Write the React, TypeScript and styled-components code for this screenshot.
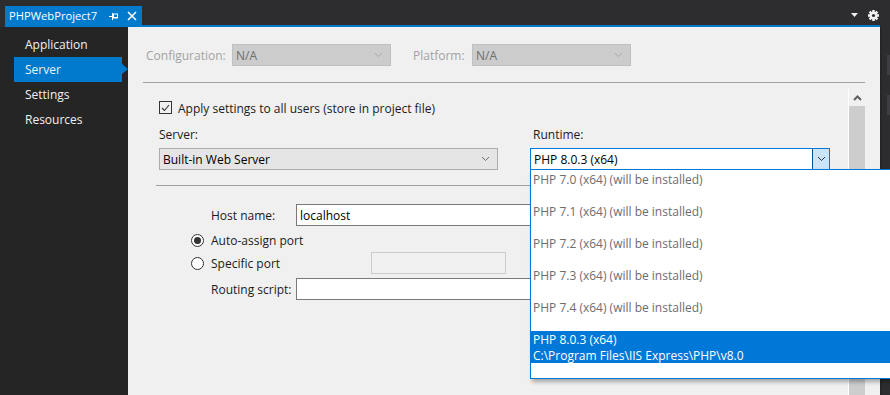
import React from 'react';
import styled, { createGlobalStyle } from 'styled-components';

const FONT = `"Open Sans", "Noto Sans", sans-serif`;

const Global = createGlobalStyle`
  html, body { margin: 0; padding: 0; background: #2d2d30; overflow: hidden; }
  * { box-sizing: border-box; }
`;

const Window = styled.div`
  width: 890px;
  height: 395px;
  overflow: hidden;
  background: #2d2d30;
  display: flex;
  flex-direction: column;
  font-family: ${FONT};
  font-size: 12px;
`;

const TabStrip = styled.div`
  height: 27px;
  flex: none;
  display: flex;
  padding-left: 5px;
  padding-right: 10px;
`;

const Tab = styled.div`
  margin-top: 6px;
  height: 21px;
  width: 137px;
  background: #007acc;
  color: #ffffff;
  display: flex;
  align-items: center;
  padding: 0 1px 2px 4px;
  font-size: 11.2px;
`;

const TabTitle = styled.span`
  flex: 1;
`;

const TabIcon = styled.span`
  display: flex;
  align-items: center;
  justify-content: center;
  width: 18px;
  height: 16px;
`;

const TabLine = styled.div`
  flex: 1;
  border-bottom: 2px solid #007acc;
  display: flex;
  justify-content: flex-end;
  align-items: center;
  gap: 10px;
  padding: 5px 1px 0 0;
`;

const Main = styled.div`
  flex: 1;
  display: flex;
  min-height: 0;
`;

const Sidebar = styled.nav`
  width: 128px;
  flex: none;
  background: #252526;
  padding-top: 5px;
  display: flex;
  flex-direction: column;
`;

const NavItem = styled.div<{ $active?: boolean }>`
  position: relative;
  height: 25px;
  margin-left: 14px;
  width: 108px;
  padding-left: 11px;
  line-height: 25px;
  color: #f1f1f1;
  background: ${(p) => (p.$active ? '#007acc' : 'transparent')};
  &::after {
    content: '';
    display: ${(p) => (p.$active ? 'block' : 'none')};
    position: absolute;
    right: -6px;
    top: 7px;
    border-left: 6px solid #007acc;
    border-top: 5px solid transparent;
    border-bottom: 5px solid transparent;
  }
`;

const Panel = styled.section`
  width: 752px;
  flex: none;
  background: #f0f0f0;
  display: flex;
  flex-direction: column;
  padding: 0 15px;
`;

const ConfigRow = styled.div`
  margin-top: 17px;
  height: 22px;
  display: flex;
  align-items: center;
  padding-left: 3px;
`;

const DimLabel = styled.span<{ $w: number; $ml?: number }>`
  width: ${(p) => p.$w}px;
  margin-left: ${(p) => p.$ml ?? 0}px;
  color: #a2a2a2;
`;

const Select = styled.div<{ $w: number; $variant: 'disabled' | 'normal' | 'focus' }>`
  position: relative;
  width: ${(p) => p.$w}px;
  height: 22px;
  display: flex;
  align-items: center;
  border: 1px solid
    ${(p) => (p.$variant === 'disabled' ? '#bfbfbf' : p.$variant === 'focus' ? '#0078d7' : '#acacac')};
  background: ${(p) => (p.$variant === 'disabled' ? '#cccccc' : p.$variant === 'focus' ? '#ffffff' : '#e5e5e5')};
  color: ${(p) => (p.$variant === 'disabled' ? '#6d6d6d' : '#000000')};
`;

const SelectText = styled.span`
  flex: 1;
  padding-left: 3px;
  white-space: nowrap;
`;

const SelectButton = styled.span<{ $focus?: boolean }>`
  width: 17px;
  height: 100%;
  display: flex;
  align-items: center;
  justify-content: center;
  margin-right: ${(p) => (p.$focus ? '0' : '3px')};
  background: ${(p) => (p.$focus ? '#cce4f7' : 'transparent')};
  border-left: ${(p) => (p.$focus ? '1px solid #005499' : 'none')};
`;

const Rule = styled.div<{ $ml?: number; $mt: number; $mr?: number }>`
  height: 1px;
  flex: none;
  background: #a0a0a0;
  margin-top: ${(p) => p.$mt}px;
  margin-left: ${(p) => p.$ml ?? 0}px;
  margin-right: ${(p) => p.$mr ?? 0}px;
`;

const ScrollArea = styled.div`
  margin-top: 6px;
  flex: 1;
  display: flex;
  min-height: 0;
`;

const Content = styled.div`
  flex: 1;
  padding: 12px 0 0 16px;
  display: flex;
  flex-direction: column;
  color: #1b1b1b;
`;

const Scrollbar = styled.div`
  width: 17px;
  flex: none;
  border-left: 1px solid #ffffff;
  display: flex;
  flex-direction: column;
`;

const ScrollArrow = styled.div`
  height: 17px;
  display: flex;
  align-items: center;
  justify-content: center;
  background: #f0f0f0;
`;

const ScrollThumb = styled.div`
  flex: 1;
  background: #cdcdcd;
`;

const CheckRow = styled.label`
  display: flex;
  align-items: center;
  height: 13px;
  gap: 6px;
  & > span:last-child {
    padding-top: 2px;
  }
`;

const CheckBox = styled.span`
  width: 13px;
  height: 13px;
  border: 1px solid #333333;
  display: flex;
  align-items: center;
  justify-content: center;
`;

const Columns = styled.div`
  display: flex;
  gap: 32px;
  margin-top: 12px;
`;

const Column = styled.div<{ $labelPad?: number }>`
  display: flex;
  flex-direction: column;
  gap: 5px;
  & > span:first-child {
    padding-left: ${(p) => p.$labelPad ?? 0}px;
    line-height: 16px;
    padding-top: 1px;
  }
`;

const FieldRow = styled.div<{ $mt: number; $h?: number }>`
  display: flex;
  align-items: center;
  height: ${(p) => p.$h ?? 22}px;
  margin-top: ${(p) => p.$mt}px;
`;

const FieldLabel = styled.span`
  margin-left: 52px;
  width: 85px;
`;

const TextInput = styled.div<{ $w: number; $disabled?: boolean }>`
  width: ${(p) => p.$w}px;
  height: 22px;
  border: 1px solid ${(p) => (p.$disabled ? '#cccccc' : '#7a7a7a')};
  background: ${(p) => (p.$disabled ? '#f0f0f0' : '#ffffff')};
  display: flex;
  align-items: center;
  padding-left: 3px;
  color: #000;
`;

const RadioLabel = styled.label<{ $w?: number }>`
  margin-left: 32px;
  display: flex;
  align-items: center;
  gap: 7px;
  width: ${(p) => (p.$w ? `${p.$w}px` : 'auto')};
`;

const RadioDot = styled.span<{ $on?: boolean }>`
  width: 13px;
  height: 13px;
  border-radius: 50%;
  border: 1px solid #333333;
  background: #ffffff;
  display: flex;
  align-items: center;
  justify-content: center;
  &::after {
    content: '';
    display: ${(p) => (p.$on ? 'block' : 'none')};
    width: 7px;
    height: 7px;
    border-radius: 50%;
    background: #333333;
  }
`;

const Popup = styled.ul`
  position: absolute;
  z-index: 10;
  top: 100%;
  left: -1px;
  width: 372px;
  margin: 0;
  padding: 1px 0 15px 0;
  list-style: none;
  background: #ffffff;
  border: 1px solid #0078d7;
  box-shadow: 2px 3px 4px rgba(0, 0, 0, 0.3);
`;

const PopupItem = styled.li<{ $selected?: boolean }>`
  height: 32px;
  padding: 1px 0 0 2px;
  line-height: 16px;
  white-space: nowrap;
  color: ${(p) => (p.$selected ? '#ffffff' : '#6d6d6d')};
  background: ${(p) => (p.$selected ? '#0078d7' : 'transparent')};
  display: flex;
  flex-direction: column;
`;

const RightStrip = styled.div`
  flex: 1;
  background: #2d2d30;
  border-left: 2px solid #252526;
  display: flex;
  flex-direction: column;
  align-items: flex-end;
`;

const StripHint = styled.div<{ $mt: number }>`
  width: 3px;
  height: 20px;
  margin-top: ${(p) => p.$mt}px;
  background: #3e3e42;
`;

const Chevron = ({ color, up }: { color: string; up?: boolean }) => (
  <svg width="9" height="6" viewBox="0 0 9 6">
    <polyline
      points={up ? '1,5 4.5,1.5 8,5' : '1,1 4.5,4.5 8,1'}
      fill="none"
      stroke={color}
      strokeWidth={up ? 2 : 1}
    />
  </svg>
);

const Gear = () => {
  const teeth = [0, 45, 90, 135];
  return (
    <svg width="11" height="11" viewBox="0 0 11 11">
      {teeth.map((a) => (
        <rect key={a} x="4.2" y="0" width="2.6" height="11" fill="#f1f1f1" transform={`rotate(${a} 5.5 5.5)`} />
      ))}
      <circle cx="5.5" cy="5.5" r="3.8" fill="#f1f1f1" />
      <circle cx="5.5" cy="5.5" r="1.6" fill="#2d2d30" />
    </svg>
  );
};

const versions = ['7.0', '7.1', '7.2', '7.3', '7.4'];

export default function App() {
  return (
    <Window>
      <Global />
      <TabStrip>
        <Tab>
          <TabTitle>PHPWebProject7</TabTitle>
          <TabIcon>
            <svg width="10" height="8" viewBox="0 0 10 8">
              <line x1="0" y1="4.5" x2="4" y2="4.5" stroke="#fff" strokeWidth="1" />
              <line x1="3.5" y1="1" x2="3.5" y2="8" stroke="#fff" strokeWidth="1" />
              <rect x="4.5" y="2" width="4" height="4" fill="none" stroke="#fff" strokeWidth="1" />
              <line x1="4" y1="5.5" x2="9" y2="5.5" stroke="#fff" strokeWidth="1" />
            </svg>
          </TabIcon>
          <TabIcon>
            <svg width="10" height="10" viewBox="0 0 10 10">
              <path d="M1 1 L9 9 M9 1 L1 9" stroke="#fff" strokeWidth="1.5" />
            </svg>
          </TabIcon>
        </Tab>
        <TabLine>
          <svg width="7" height="4" viewBox="0 0 7 4">
            <polygon points="0,0 7,0 3.5,4" fill="#f1f1f1" />
          </svg>
          <Gear />
        </TabLine>
      </TabStrip>
      <Main>
        <Sidebar>
          <NavItem>Application</NavItem>
          <NavItem $active>Server</NavItem>
          <NavItem>Settings</NavItem>
          <NavItem>Resources</NavItem>
        </Sidebar>
        <Panel>
          <ConfigRow>
            <DimLabel $w={86}>Configuration:</DimLabel>
            <Select $w={159} $variant="disabled">
              <SelectText>N/A</SelectText>
              <SelectButton>
                <Chevron color="#a8a8a8" />
              </SelectButton>
            </Select>
            <DimLabel $w={59} $ml={22}>Platform:</DimLabel>
            <Select $w={159} $variant="disabled">
              <SelectText>N/A</SelectText>
              <SelectButton>
                <Chevron color="#a8a8a8" />
              </SelectButton>
            </Select>
          </ConfigRow>
          <Rule $mt={16} />
          <ScrollArea>
            <Content>
              <CheckRow>
                <CheckBox>
                  <svg width="9" height="8" viewBox="0 0 9 8">
                    <polyline points="1,4 3.5,6.5 8,1" fill="none" stroke="#333" strokeWidth="1.1" />
                  </svg>
                </CheckBox>
                <span>Apply settings to all users (store in project file)</span>
              </CheckRow>
              <Columns>
                <Column>
                  <span>Server:</span>
                  <Select $w={339} $variant="normal">
                    <SelectText>Built-in Web Server</SelectText>
                    <SelectButton>
                      <Chevron color="#6d6d6d" />
                    </SelectButton>
                  </Select>
                </Column>
                <Column $labelPad={3}>
                  <span>Runtime:</span>
                  <Select $w={300} $variant="focus">
                    <SelectText>PHP 8.0.3 (x64)</SelectText>
                    <SelectButton $focus>
                      <Chevron color="#333333" />
                    </SelectButton>
                    <Popup>
                      {versions.map((v) => (
                        <PopupItem key={v}>
                          <span>PHP {v} (x64) (will be installed)</span>
                        </PopupItem>
                      ))}
                      <PopupItem $selected>
                        <span>PHP 8.0.3 (x64)</span>
                        <span>C:\Program Files\IIS Express\PHP\v8.0</span>
                      </PopupItem>
                    </Popup>
                  </Select>
                </Column>
              </Columns>
              <Rule $mt={15} $ml={-3} $mr={16} />
              <FieldRow $mt={18}>
                <FieldLabel>Host name:</FieldLabel>
                <TextInput $w={534}>localhost</TextInput>
              </FieldRow>
              <FieldRow $mt={6} $h={16}>
                <RadioLabel>
                  <RadioDot $on />
                  Auto-assign port
                </RadioLabel>
              </FieldRow>
              <FieldRow $mt={4}>
                <RadioLabel $w={180}>
                  <RadioDot />
                  Specific port
                </RadioLabel>
                <TextInput $w={135} $disabled />
              </FieldRow>
              <FieldRow $mt={4}>
                <FieldLabel>Routing script:</FieldLabel>
                <TextInput $w={534} />
              </FieldRow>
            </Content>
            <Scrollbar>
              <ScrollArrow>
                <Chevron color="#606060" up />
              </ScrollArrow>
              <ScrollThumb />
            </Scrollbar>
          </ScrollArea>
        </Panel>
        <RightStrip>
          <StripHint $mt={28} />
          <StripHint $mt={20} />
        </RightStrip>
      </Main>
    </Window>
  );
}
